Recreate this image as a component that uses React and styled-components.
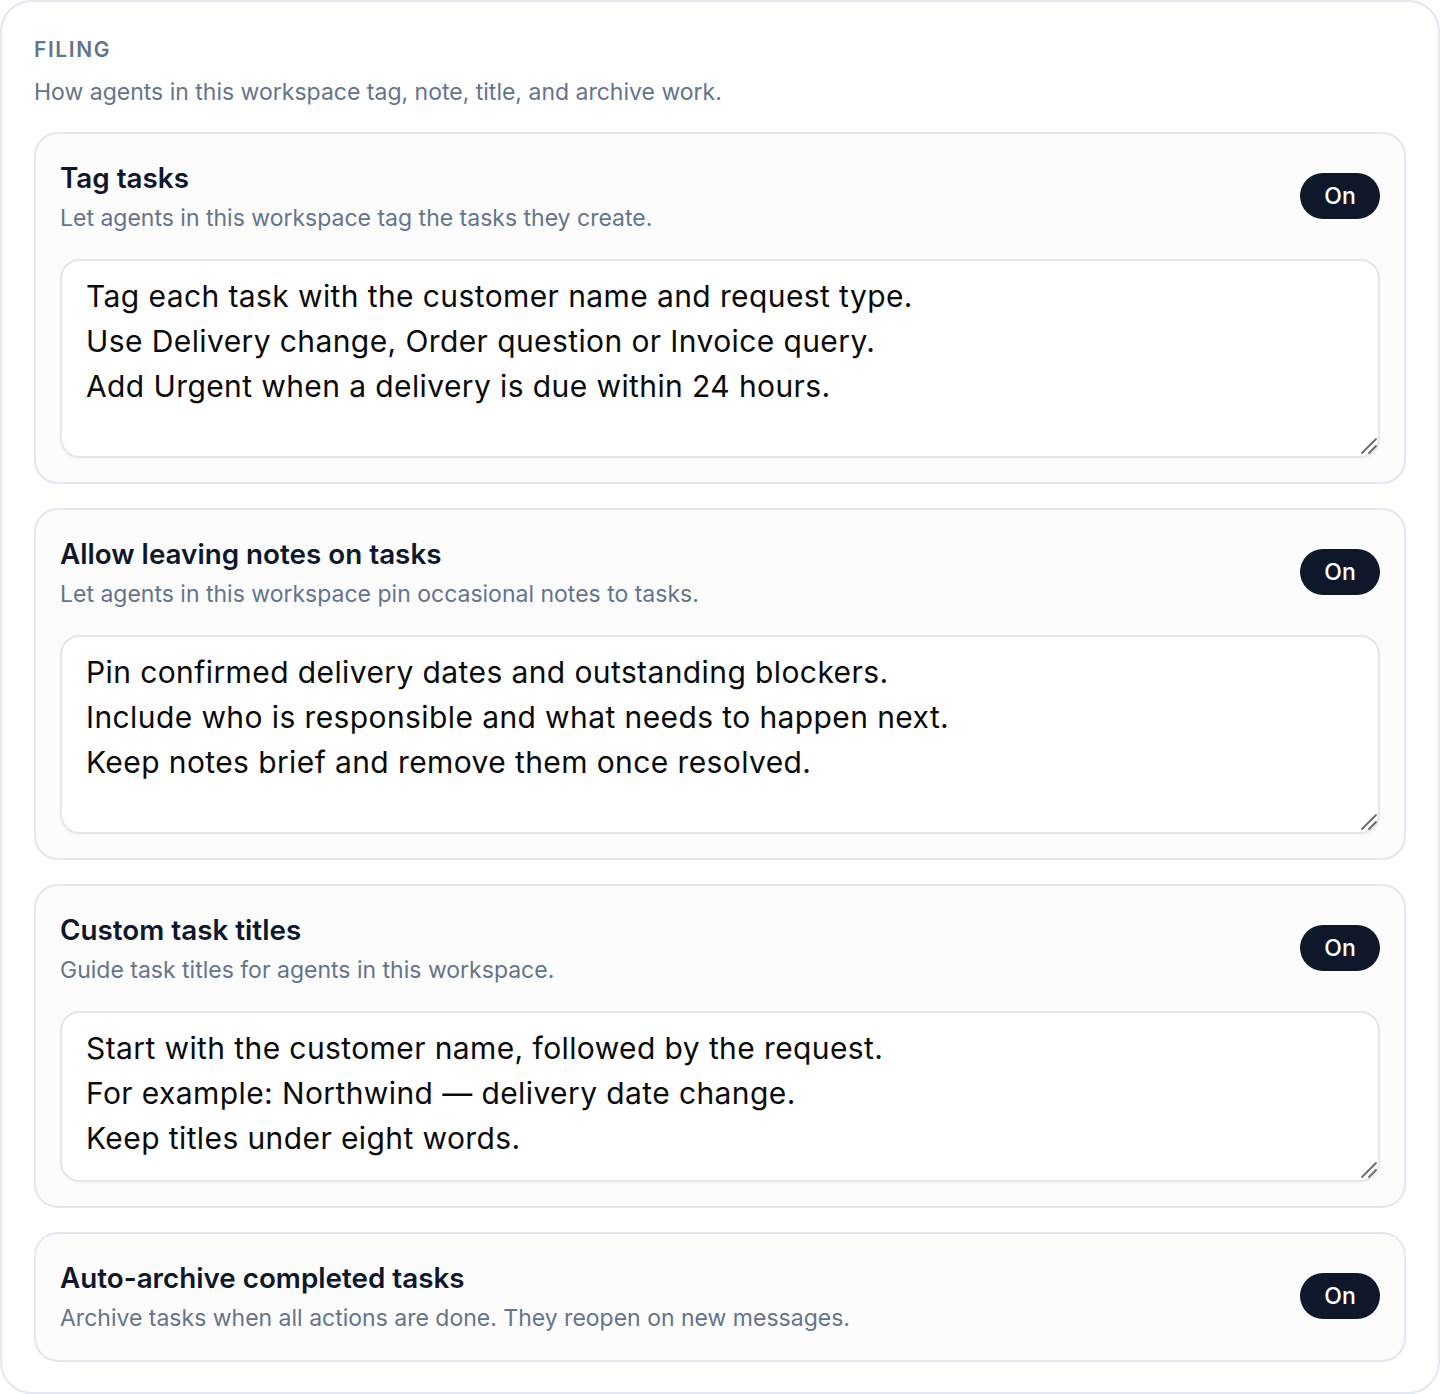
import styled, { createGlobalStyle } from "styled-components";

const GlobalStyle = createGlobalStyle`
  body {
    margin: 0;
    background: #ffffff;
    font-family: Inter, "Noto Sans", sans-serif;
  }
  * {
    box-sizing: border-box;
  }
`;

const Panel = styled.section`
  width: 1440px;
  border: 2px solid #e2e8f0;
  border-radius: 32px;
  background: #ffffff;
  padding: 32px 32px 30px;
  display: flex;
  flex-direction: column;
`;

const Eyebrow = styled.h2`
  margin: 0;
  font-size: 21px;
  line-height: 32px;
  font-weight: 600;
  letter-spacing: 1.6px;
  text-transform: uppercase;
  color: #64748b;
`;

const Lead = styled.p`
  margin: 8px 0 22px;
  font-size: 23px;
  line-height: 36px;
  color: #64748b;
`;

const List = styled.div`
  display: flex;
  flex-direction: column;
  gap: 24px;
`;

const Card = styled.div`
  border: 2px solid #e2e8f0;
  border-radius: 24px;
  background: #fcfcfd;
  padding: 24px;
  display: flex;
  flex-direction: column;
  gap: 23px;
`;

const Header = styled.div`
  display: flex;
  align-items: center;
  justify-content: space-between;
  gap: 24px;
`;

const Titles = styled.div`
  display: flex;
  flex-direction: column;
  gap: 2px;
`;

const Title = styled.h3`
  margin: 0;
  font-size: 27.8px;
  line-height: 40px;
  font-weight: 600;
  color: #0f172a;
`;

const Hint = styled.p`
  margin: 0;
  font-size: 23px;
  line-height: 36px;
  color: #64748b;
`;

const Toggle = styled.button`
  flex-shrink: 0;
  height: 46px;
  min-width: 80px;
  padding: 0 22px;
  margin-top: -2px;
  border: none;
  border-radius: 999px;
  background: #0f172a;
  color: #ffffff;
  font-family: inherit;
  font-size: 23px;
  font-weight: 500;
  cursor: pointer;
`;

const Field = styled.div`
  position: relative;
`;

const Instructions = styled.textarea`
  display: block;
  width: 100%;
  height: ${(p) => p.$height}px;
  border: 2px solid #e5e7eb;
  border-radius: 20px;
  background: #ffffff;
  padding: 13px 24px;
  font-family: inherit;
  font-size: 30px;
  letter-spacing: 0.4px;
  line-height: 45px;
  color: #0a0a0a;
  resize: none;
  outline: none;
  box-shadow: 0 1px 2px rgba(15, 23, 42, 0.04);
`;

// resize grip in the bottom-right corner of the textarea
const Grip = styled.svg`
  position: absolute;
  right: 2px;
  bottom: 3px;
  width: 18px;
  height: 18px;
  pointer-events: none;
`;

const settings = [
  {
    title: "Tag tasks",
    hint: "Let agents in this workspace tag the tasks they create.",
    text: "Tag each task with the customer name and request type.\nUse Delivery change, Order question or Invoice query.\nAdd Urgent when a delivery is due within 24 hours.",
    height: 199,
  },
  {
    title: "Allow leaving notes on tasks",
    hint: "Let agents in this workspace pin occasional notes to tasks.",
    text: "Pin confirmed delivery dates and outstanding blockers.\nInclude who is responsible and what needs to happen next.\nKeep notes brief and remove them once resolved.",
    height: 199,
  },
  {
    title: "Custom task titles",
    hint: "Guide task titles for agents in this workspace.",
    text: "Start with the customer name, followed by the request.\nFor example: Northwind \u2014 delivery date change.\nKeep titles under eight words.",
    height: 171,
  },
  {
    title: "Auto-archive completed tasks",
    hint: "Archive tasks when all actions are done. They reopen on new messages.",
  },
];

export default function App() {
  return (
    <>
      <GlobalStyle />
      <Panel>
        <Eyebrow>Filing</Eyebrow>
        <Lead>How agents in this workspace tag, note, title, and archive work.</Lead>
        <List>
          {settings.map((s) => (
            <Card key={s.title}>
              <Header>
                <Titles>
                  <Title>{s.title}</Title>
                  <Hint>{s.hint}</Hint>
                </Titles>
                <Toggle type="button">On</Toggle>
              </Header>
              {s.text && (
                <Field>
                  <Instructions $height={s.height} defaultValue={s.text} spellCheck={false} />
                  <Grip viewBox="0 0 18 18">
                    <path d="M2 16 L16 2 M9 16 L16 9" stroke="#6b6b6b" strokeWidth="1.8" strokeLinecap="round" />
                  </Grip>
                </Field>
              )}
            </Card>
          ))}
        </List>
      </Panel>
    </>
  );
}
